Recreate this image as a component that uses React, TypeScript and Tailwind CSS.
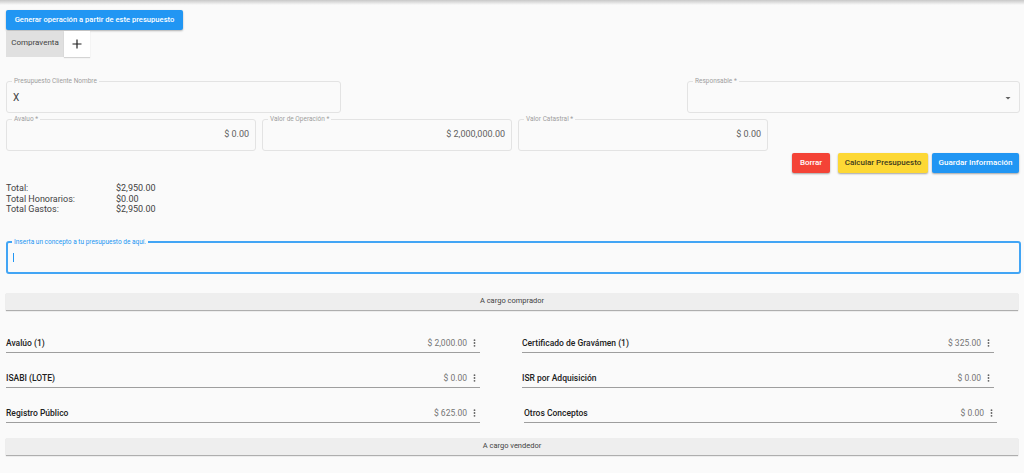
import React from "react";

function Field({
  label,
  value,
  right,
  className = "",
  select,
}: {
  label: string;
  value?: string;
  right?: boolean;
  className?: string;
  select?: boolean;
}) {
  return (
    <fieldset
      className={`border border-[#e3e3e3] rounded-[3px] h-[35px] px-[5px] min-w-0 ${className}`}
    >
      <legend className="px-[2px] text-[6.5px] leading-[7px] text-[#9e9e9e]">{label}</legend>
      <div
        className={`h-[24px] flex items-center px-[1px] ${right ? "justify-end" : "justify-between"}`}
      >
        {value !== undefined && (
          <span className={right ? "text-[9px] text-[#616161]" : "text-[10px] text-[#424242]"}>{value}</span>
        )}
        {select && (
          <>
            <span />
            <svg width="8" height="8" viewBox="0 0 8 8" className="mr-[1px] mt-[1px]">
              <path d="M1.5 3 L6.5 3 L4 5.5 Z" fill="#616161" />
            </svg>
          </>
        )}
      </div>
    </fieldset>
  );
}

function Kebab() {
  return (
    <svg width="3" height="8" viewBox="0 0 3 8" className="ml-[6px]">
      <circle cx="1.5" cy="1.2" r="0.9" fill="#616161" />
      <circle cx="1.5" cy="4" r="0.9" fill="#616161" />
      <circle cx="1.5" cy="6.8" r="0.9" fill="#616161" />
    </svg>
  );
}

function Item({ name, amount, className = "" }: { name: string; amount: string; className?: string }) {
  return (
    <div className={`h-[35px] flex items-end ${className}`}>
      <div className="w-full flex items-center justify-between border-b border-[#9e9e9e] h-[17px] pb-[1px]">
        <span className="text-[8.5px] font-medium text-[#212121]">{name}</span>
        <span className="flex items-center text-[8.5px] text-[#757575] pr-[4px]">
          {amount}
          <Kebab />
        </span>
      </div>
    </div>
  );
}

function Bar({ text }: { text: string }) {
  return (
    <div className="mx-[6px] h-[17px] bg-[#eeeeee] shadow-[0_1px_1px_rgba(0,0,0,0.3)] flex items-center justify-center text-[7.5px] text-[#424242]">
      {text}
    </div>
  );
}

export default function App() {
  return (
    <div className="min-h-[473px] bg-[#fafafa] font-['Roboto',sans-serif] text-[#212121]">
      <div className="h-[5px] bg-gradient-to-b from-[#c8c8c8] to-[#fafafa]" />
      <div className="px-[6px] pt-[5px]">
        <button className="block h-[20px] w-[177px] rounded-[2px] bg-[#2196f3] text-white text-[7.6px] font-medium shadow-[0_1px_2px_rgba(0,0,0,0.3)]">
          Generar operación a partir de este presupuesto
        </button>
        <div className="flex mt-[1px]">
          <div className="w-[58px] h-[26px] bg-[#e0e0e0] text-[8px] flex items-center justify-center text-[#424242] pb-[2px]">
            Compraventa
          </div>
          <div className="w-[26px] h-[26px] bg-white shadow-[0_1px_1px_rgba(0,0,0,0.15)] flex items-center justify-center">
            <svg width="10" height="10" viewBox="0 0 10 10">
              <path d="M5 0.5 V9.5 M0.5 5 H9.5" stroke="#212121" strokeWidth="1.2" />
            </svg>
          </div>
        </div>
      </div>

      <div className="flex justify-between pl-[6px] pr-[4px] mt-[21px]">
        <Field label="Presupuesto Cliente Nombre" value="X" className="w-[335px]" />
        <Field label="Responsable *" select className="w-[333px]" />
      </div>

      <div className="grid grid-cols-4 gap-[6px] pl-[6px] mt-[3px]">
        <Field label="Avaluo *" value="$ 0.00" right />
        <Field label="Valor de Operación *" value="$ 2,000,000.00" right />
        <Field label="Valor Catastral *" value="$ 0.00" right />
      </div>

      <div className="flex justify-end gap-[4px] pr-[5px] mt-[2px]">
        <button className="h-[20px] w-[38px] mr-[4px] rounded-[2px] bg-[#f44336] text-white text-[8px] font-medium shadow-[0_1px_2px_rgba(0,0,0,0.35)]">
          Borrar
        </button>
        <button className="h-[20px] w-[90px] rounded-[2px] bg-[#fdd835] text-[#3e3a1e] text-[8px] font-medium shadow-[0_1px_2px_rgba(0,0,0,0.35)]">
          Calcular Presupuesto
        </button>
        <button className="h-[20px] w-[87px] rounded-[2px] bg-[#2196f3] text-white text-[8px] font-medium shadow-[0_1px_2px_rgba(0,0,0,0.35)]">
          Guardar Información
        </button>
      </div>

      <div className="px-[6px] mt-[10px] text-[9px] leading-[10.5px] text-[#424242]">
        <div className="flex"><span className="w-[110px]">Total:</span><span>$2,950.00</span></div>
        <div className="flex"><span className="w-[110px]">Total Honorarios:</span><span>$0.00</span></div>
        <div className="flex"><span className="w-[110px]">Total Gastos:</span><span>$2,950.00</span></div>
      </div>

      <div className="pl-[6px] pr-[3px] mt-[24px]">
        <fieldset className="border-2 border-[#42a5f5] rounded-[3px] h-[35px] px-[4px] min-w-0">
          <legend className="px-[2px] text-[6.5px] leading-[7px] text-[#2196f3]">
            Inserta un concepto a tu presupuesto de aquí.
          </legend>
          <div className="h-[24px] flex items-center">
            <span className="w-[1px] h-[9px] bg-[#2196f3] ml-[1px]" />
          </div>
        </fieldset>
      </div>

      <div className="mt-[19px]">
        <Bar text="A cargo comprador" />
      </div>

      <div className="grid grid-cols-2 mt-[8px]">
        <div className="pl-[6px] pr-[32px]">
          <Item name="Avalúo (1)" amount="$ 2,000.00" className="h-[17px]" />
          <Item name="ISABI (LOTE)" amount="$ 0.00" />
          <Item name="Registro Público" amount="$ 625.00" />
        </div>
        <div className="pl-[10px] pr-[30px]">
          <Item name="Certificado de Gravámen (1)" amount="$ 325.00" className="h-[17px]" />
          <Item name="ISR por Adquisición" amount="$ 0.00" />
          <Item name="Otros Conceptos" amount="$ 0.00" className="ml-[2px] mr-[-3px]" />
        </div>
      </div>

      <div className="mt-[15px]">
        <Bar text="A cargo vendedor" />
      </div>
    </div>
  );
}
